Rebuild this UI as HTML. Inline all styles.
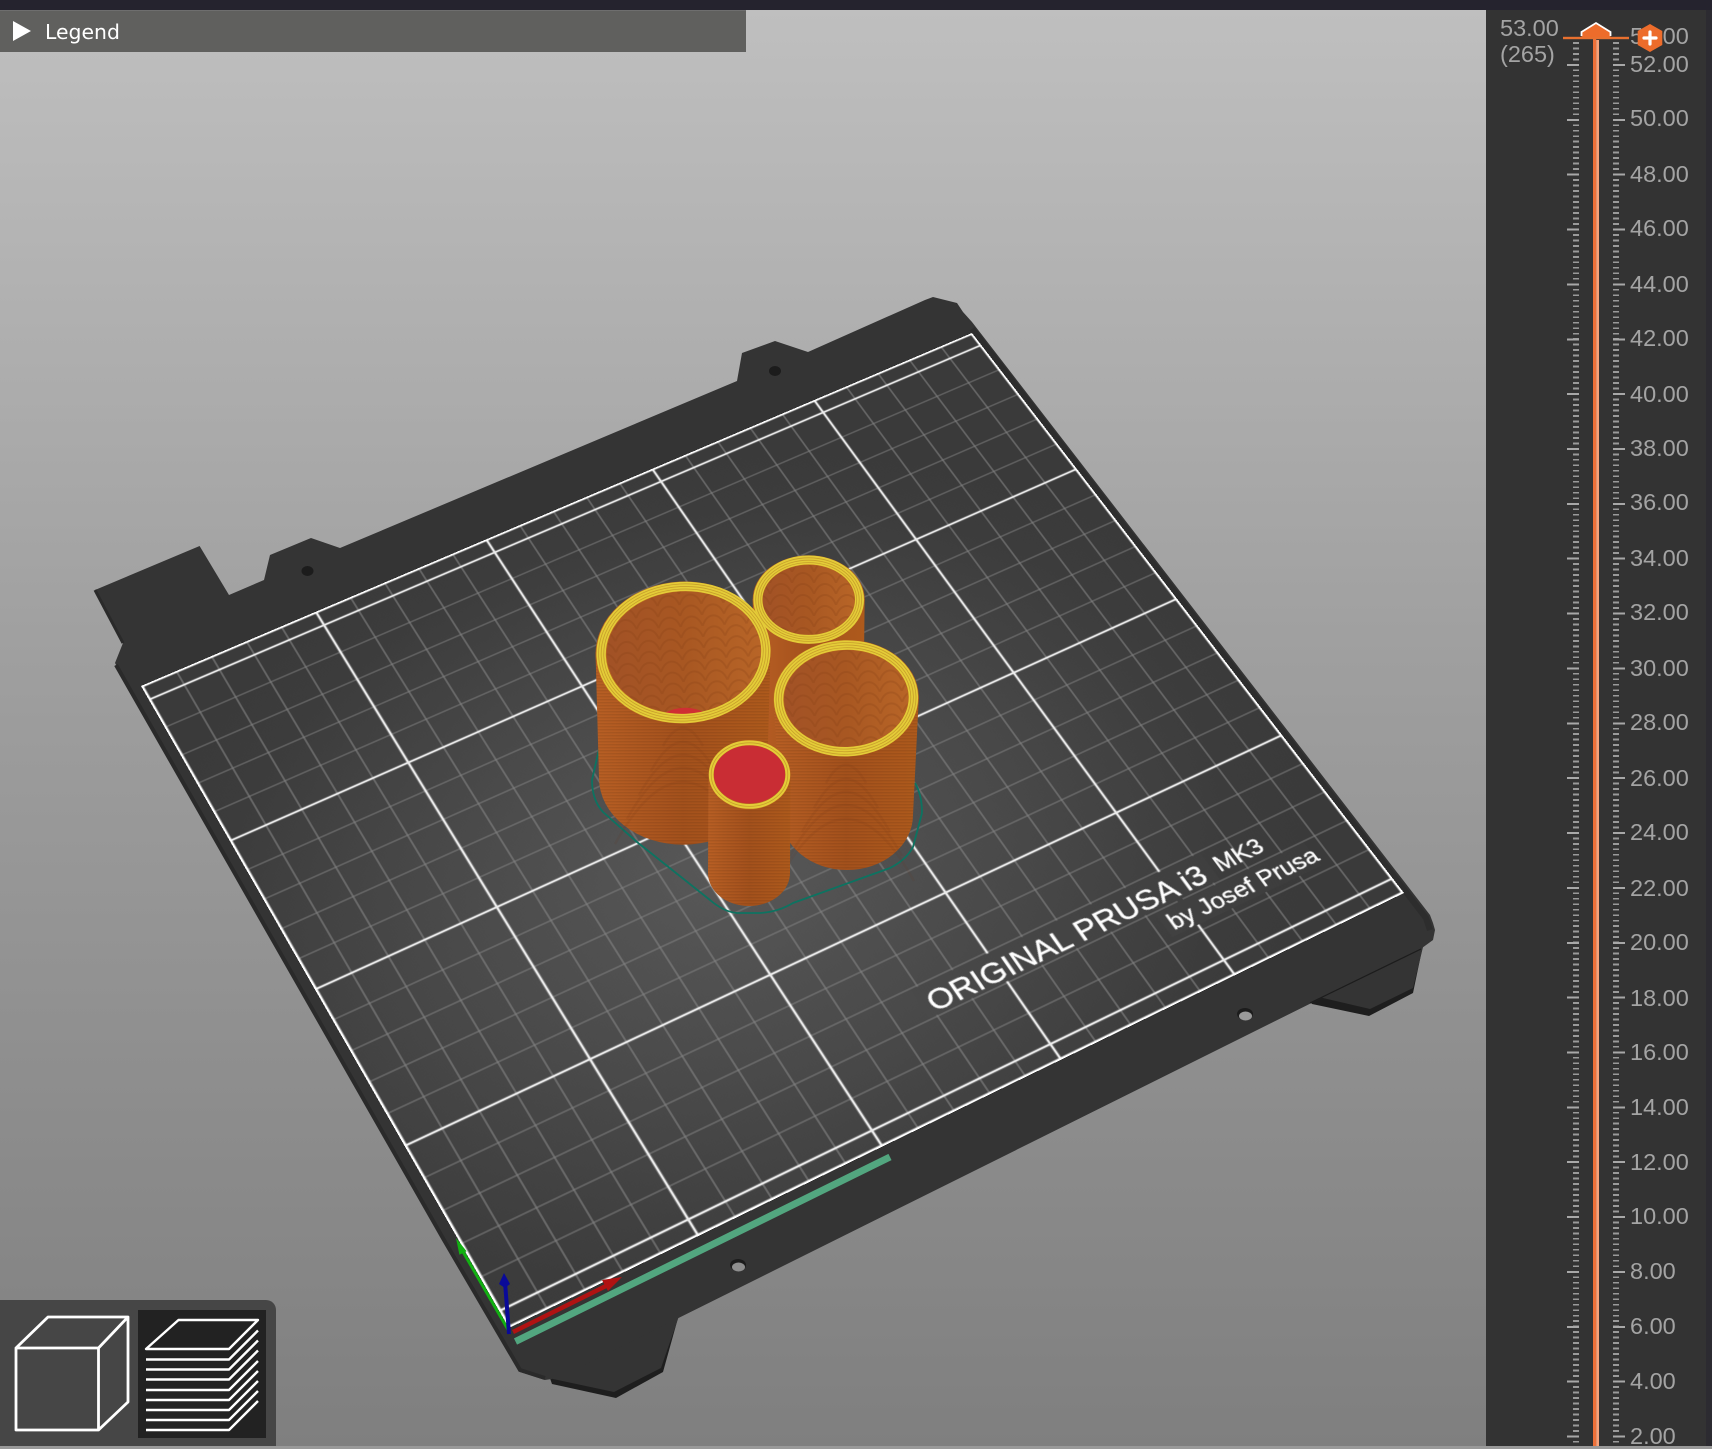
<!DOCTYPE html>
<html><head><meta charset="utf-8"><title>Legend</title>
<style>
html,body{margin:0;padding:0;width:1712px;height:1446px;overflow:hidden;background:#999}
#v{position:absolute;left:0;top:10px;width:1486px;height:1436px;background:linear-gradient(180deg,#bfbfbf 0,#9f9f9f 45%,#7f7f7f 100%)}
#top{position:absolute;left:0;top:0;width:1712px;height:10px;background:#25232e}
svg.s{position:absolute;left:0;top:0}
#area{position:absolute;left:0;top:0;width:1000px;height:840px;transform-origin:0 0;transform:matrix3d(.9985,-.36917,0,.00007372, .41874,.6701,0,-.00013731, 0,0,1,0, 157.26,765.12,0,1.11534);background:radial-gradient(ellipse 620px 520px at 42% 58%,#585858 0,#4a4a4a 45%,#3c3c3c 85%,#3a3a3a 100%)}
#legend{position:absolute;left:0;top:10px;width:746px;height:42px;background:#60605e;border-top:1px solid #6e6e6e;box-sizing:border-box;color:#fff;font:20.4px/42px "DejaVu Sans","Liberation Sans",sans-serif}
#legend span{position:absolute;left:45px;top:0}
#tri{position:absolute;left:13px;top:10px;width:0;height:0;border-left:18px solid #fff;border-top:10px solid transparent;border-bottom:10px solid transparent}
#panel{position:absolute;left:1486px;top:10px;width:220px;height:1436px;background:#333}
#strip{position:absolute;left:1706px;top:10px;width:6px;height:1436px;background:#2c2b31}
.t{position:absolute;top:42px;height:1404px;width:6px;background:repeating-linear-gradient(180deg,#9a9a9a 0,#9a9a9a 1.8px,transparent 1.8px,transparent 5.486px)}
.m{position:absolute;top:63.500px;height:1382px;width:12px;background:repeating-linear-gradient(180deg,#a8a8a8 0,#a8a8a8 2px,transparent 2px,transparent 54.86px)}
.l{position:absolute;left:1630px;font:23.500px/26px "Liberation Sans",sans-serif;color:#a4a4a4;white-space:nowrap}
#ui{position:absolute;left:0;top:1300px;width:276px;height:146px;background:#464646;border-radius:0 10px 0 0}
</style></head><body>
<div id="v"></div>
<div id="top"></div>

<svg class="s" width="1486" height="1446" viewBox="0 0 1486 1446">
  <polygon points="678,1318 663,1372 616,1398 552,1384 540,1350" fill="#1e1e1e"/>
  <polygon points="679,1316 661,1368 614,1392 553,1379 540,1345" fill="#343434"/>
  <polygon points="1423,945 1413,993 1369,1016 1312,1004 1300,990" fill="#1e1e1e"/>
  <polygon points="1424,943 1413,988 1370,1009 1323,998 1300,985" fill="#343434"/>
  <polygon fill="#343434" points="95,590 199.6,546 229,595 264,580 270,555 311,538 340,548 737,381 742,353 775,341 808,352 925,300 933,297 957,303 963,312 972,322 1430,915 1433,923 1435,930 1433,940 1422,948 558,1378 545,1380 520,1372 444,1240 115,663 123,643"/>
  <polyline points="95,590 123,643" fill="none" stroke="#2a2a2a" stroke-width="3"/>
  <polyline points="116,665 444,1240 520,1370 545,1378" fill="none" stroke="#2a2a2a" stroke-width="4"/>
  <polyline points="972,329 1426,918 1430,930" fill="none" stroke="#2d2d2d" stroke-width="6"/>
  <polyline points="1421,949 1310,1003" fill="none" stroke="#1c1c1c" stroke-width="1.200"/>
  <ellipse cx="307.500" cy="571" rx="6" ry="5" fill="#1c1c1c"/>
  <ellipse cx="775" cy="371" rx="6" ry="5" fill="#1c1c1c"/>
  <ellipse cx="1245" cy="1014" rx="8" ry="6" fill="#1c1c1c"/><ellipse cx="1245.500" cy="1016" rx="6.500" ry="4.500" fill="#9a9a9a"/>
  <ellipse cx="738" cy="1265" rx="8" ry="6" fill="#1c1c1c"/><ellipse cx="738.500" cy="1267" rx="6.500" ry="4.500" fill="#8e8e8e"/>
</svg>

<div id="area">
<svg width="1000" height="840" viewBox="0 0 1000 840" style="display:block">
  <defs>
    <linearGradient id="m1"><stop offset="0" stop-color="#494949"/><stop offset="1" stop-color="#3f3f3f"/></linearGradient>
    <linearGradient id="m2"><stop offset="0" stop-color="#414141"/><stop offset="1" stop-color="#3c3c3c"/></linearGradient>
  </defs>
  <path fill="none" stroke="#828282" stroke-width="1.200" d="M40 0V840M80 0V840M120 0V840M160 0V840M240 0V840M280 0V840M320 0V840M360 0V840M440 0V840M480 0V840M520 0V840M560 0V840M640 0V840M680 0V840M720 0V840M760 0V840M840 0V840M880 0V840M920 0V840M960 0V840M0 60H1000M0 100H1000M0 140H1000M0 180H1000M0 260H1000M0 300H1000M0 340H1000M0 380H1000M0 460H1000M0 500H1000M0 540H1000M0 580H1000M0 660H1000M0 700H1000M0 740H1000M0 780H1000"/>
  <path fill="none" stroke="#ececec" stroke-width="2.600" d="M200 0V840M400 0V840M600 0V840M800 0V840M0 20H1000M0 220H1000M0 420H1000M0 620H1000M0 820H1000"/>
  <rect x="512" y="701.500" width="336" height="37" fill="url(#m1)"/>
  <rect x="770" y="741.500" width="176" height="31.500" fill="url(#m2)"/>
  <rect x="797" y="738" width="6" height="4" fill="#404040"/>
  <rect x="1.200" y="1.200" width="997.600" height="837.600" fill="none" stroke="#fff" stroke-width="2.400"/>
  <g fill="#fff" font-family="'Liberation Sans',sans-serif" stroke="#fff" stroke-width=".3">
    <text x="520" y="735" font-size="33.700">ORIGINAL PRUSA i3</text>
    <text x="853" y="731" font-size="26.500">MK3</text>
    <text x="776" y="767" font-size="26.300">by Josef Prusa</text>
  </g>
</svg>
</div>

<svg class="s" width="1486" height="1446" viewBox="0 0 1486 1446">
  <defs>
    <linearGradient id="b" x1="0" x2="1" y1="0" y2="0"><stop offset="0" stop-color="#b85f24"/><stop offset=".5" stop-color="#a4511c"/><stop offset="1" stop-color="#ae5a1c"/></linearGradient>
    <linearGradient id="n" x1="0" x2="1" y1="0" y2="0"><stop offset="0" stop-color="#a25226"/><stop offset=".5" stop-color="#a85722"/><stop offset="1" stop-color="#b86527"/></linearGradient>
    <pattern id="st" width="4" height="3" patternUnits="userSpaceOnUse"><rect width="4" height="1.400" fill="#000" opacity=".08"/></pattern>
    <pattern id="ch" width="22" height="11" patternUnits="userSpaceOnUse"><path d="M0 11Q4 1 11 1T22 11" fill="none" stroke="#7f3d14" stroke-opacity=".22" stroke-width="2"/></pattern>
    <g id="arcs" fill="none" stroke="#6e3410" stroke-opacity=".1" stroke-width="2.400">
      <path d="M-20 18Q0 -18 20 18M-32 43Q0 -15 32 43M-44 67Q0 -13 44 67M-56 91Q0 -11 56 91M-68 116Q0 -8 68 116"/>
    </g>
  </defs>
  <path d="M600 745L592 780Q592 800 603 812L637 842L710 900Q724 912 737 913L760 913Q778 912 793 903L890 868Q906 860 913 847L922 813Q922 795 915 783" fill="none" stroke="#0d7361" stroke-width="1.800"/>

  <!-- back -->
  <path d="M752.700 599L755 735A54 44 0 0 0 863 735L864.700 599Z" fill="url(#b)"/>
  <ellipse cx="808.700" cy="599.300" rx="56" ry="44" fill="#b8651f"/>
  <ellipse cx="808.700" cy="600" rx="46" ry="35" fill="url(#n)"/><ellipse cx="808.700" cy="600" rx="46" ry="35" fill="url(#ch)"/>
  <ellipse cx="808.700" cy="599.700" rx="50.800" ry="39.700" fill="none" stroke="#e4cc38" stroke-width="9"/>
  <g fill="none" stroke="#b07a20" stroke-opacity=".55" stroke-width=".8">
    <ellipse cx="808.700" cy="599.600" rx="53" ry="41.800"/><ellipse cx="808.700" cy="599.700" rx="50.500" ry="39.500"/><ellipse cx="808.700" cy="599.800" rx="48" ry="37.200"/>
  </g>

  <!-- big -->
  <path d="M595.500 652L599 778A84 66.700 0 0 0 767 778L770.500 652Z" fill="url(#b)"/>
  <path d="M595.500 652L599 778A84 66.700 0 0 0 767 778L770.500 652Z" fill="url(#st)"/>
  <use href="#arcs" x="683" y="728"/>
  <g transform="rotate(-3 683 652.500)">
    <ellipse cx="683" cy="652.500" rx="87.500" ry="71" fill="#b8651f"/>
    <ellipse cx="684" cy="652.500" rx="77.300" ry="61" fill="url(#n)"/><ellipse cx="684" cy="652.500" rx="77.300" ry="61" fill="url(#ch)"/>
  </g>
  <path d="M664 713Q684 703 704 712L704 718L664 718Z" fill="#cf2f33"/>
  <g transform="rotate(-3 683 652.500)">
    <ellipse cx="683.500" cy="652.500" rx="82.400" ry="66" fill="none" stroke="#e4cc38" stroke-width="9.400"/>
    <g fill="none" stroke="#b07a20" stroke-opacity=".55" stroke-width=".8">
      <ellipse cx="683.500" cy="652.500" rx="85" ry="68.600"/><ellipse cx="683.500" cy="652.500" rx="82.400" ry="66"/><ellipse cx="683.500" cy="652.500" rx="79.800" ry="63.400"/>
    </g>
  </g>

  <!-- right -->
  <path d="M773.200 698L781 815A66 55 0 0 0 913 815L918.800 698Z" fill="url(#b)"/>
  <path d="M773.200 698L781 815A66 55 0 0 0 913 815L918.800 698Z" fill="url(#st)"/>
  <use href="#arcs" x="846" y="765"/>
  <g transform="rotate(-2 846 698)">
    <ellipse cx="846" cy="698.300" rx="72.800" ry="58.300" fill="#b8651f"/>
    <ellipse cx="846" cy="698.500" rx="62" ry="48.300" fill="url(#n)"/><ellipse cx="846" cy="698.500" rx="62" ry="48.300" fill="url(#ch)"/>
    <ellipse cx="846" cy="698.400" rx="67.400" ry="53.300" fill="none" stroke="#e4cc38" stroke-width="9.400"/>
    <g fill="none" stroke="#b07a20" stroke-opacity=".55" stroke-width=".8">
      <ellipse cx="846" cy="698.400" rx="70" ry="55.900"/><ellipse cx="846" cy="698.400" rx="67.400" ry="53.300"/><ellipse cx="846" cy="698.400" rx="64.800" ry="50.700"/>
    </g>
  </g>

  <!-- front solid -->
  <path d="M708.500 775L708 873A41 33 0 0 0 790 873L790.500 775Z" fill="url(#b)"/>
  <path d="M708.500 775L708 873A41 33 0 0 0 790 873L790.500 775Z" fill="url(#st)"/>
  <ellipse cx="749.500" cy="774.700" rx="41" ry="34.700" fill="#b8651f"/>
  <ellipse cx="749.500" cy="774.400" rx="35.700" ry="29" fill="#c92d34"/>
  <ellipse cx="749.500" cy="774.600" rx="38.300" ry="31.800" fill="none" stroke="#e4cc38" stroke-width="4.800"/>
  <ellipse cx="749.500" cy="774.600" rx="38.300" ry="31.800" fill="none" stroke="#b07a20" stroke-opacity=".55" stroke-width=".8"/>

  <!-- bar & axes -->
  <line x1="515.500" y1="1341.500" x2="890" y2="1157" stroke="#52a67f" stroke-width="7"/>
  <line x1="510" y1="1333" x2="462" y2="1250" stroke="#12b012" stroke-width="3"/>
  <polygon points="456,1238 466.600,1251.300 459.400,1254.700" fill="#12b012"/>
  <line x1="513" y1="1332" x2="612" y2="1283" stroke="#b01212" stroke-width="4.500"/>
  <polygon points="622,1277 602,1280 608,1291" fill="#b01212"/>
  <line x1="509" y1="1334" x2="505" y2="1282" stroke="#0a0a98" stroke-width="4"/>
  <polygon points="504,1273 510,1284 505,1288 499,1284" fill="#0a0a98"/>
</svg>

<div id="legend"><i id="tri"></i><span>Legend</span></div>

<div id="panel"></div><div id="strip"></div>
<div class="t" style="left:1573px"></div><div class="t" style="left:1613px"></div>
<div class="m" style="left:1567px"></div><div class="m" style="left:1613px"></div>
<div class="l" style="left:1500px;top:15px">53.00</div>
<div class="l" style="left:1500px;top:41px">(265)</div>
<div class="l" style="top:23px">53.00</div>
<div class="l" style="top:51px">52.00</div>
<div class="l" style="top:105px">50.00</div>
<div class="l" style="top:161px">48.00</div>
<div class="l" style="top:215px">46.00</div>
<div class="l" style="top:271px">44.00</div>
<div class="l" style="top:325px">42.00</div>
<div class="l" style="top:381px">40.00</div>
<div class="l" style="top:435px">38.00</div>
<div class="l" style="top:489px">36.00</div>
<div class="l" style="top:545px">34.00</div>
<div class="l" style="top:599px">32.00</div>
<div class="l" style="top:655px">30.00</div>
<div class="l" style="top:709px">28.00</div>
<div class="l" style="top:765px">26.00</div>
<div class="l" style="top:819px">24.00</div>
<div class="l" style="top:875px">22.00</div>
<div class="l" style="top:929px">20.00</div>
<div class="l" style="top:985px">18.00</div>
<div class="l" style="top:1039px">16.00</div>
<div class="l" style="top:1094px">14.00</div>
<div class="l" style="top:1149px">12.00</div>
<div class="l" style="top:1203px">10.00</div>
<div class="l" style="top:1258px">8.00</div>
<div class="l" style="top:1313px">6.00</div>
<div class="l" style="top:1368px">4.00</div>
<div class="l" style="top:1423px">2.00</div>

<svg class="s" width="1712" height="1446" viewBox="0 0 1712 1446">
  <rect x="1593" y="36" width="3.200" height="1410" fill="#ee7038"/>
  <rect x="1596.200" y="40" width="2.800" height="1406" fill="#f8a27a"/>
  <rect x="1563" y="36.800" width="66" height="2.400" fill="#e8702f"/>
  <path d="M1581.500 37V32L1596 23L1610.500 32V37Z" fill="#ed6c2b"/>
  <path d="M1581.500 36V32L1596 23L1610.500 32V36" fill="none" stroke="#fff" stroke-width="1.800"/>
  <polygon points="1650,24 1662.300,31 1662.300,45 1650,52 1637.700,45 1637.700,31" fill="#ed6c2b"/>
  <path d="M1644 38H1656M1650 32V44" stroke="#fff" stroke-width="3.200" stroke-linecap="round" fill="none"/>
</svg>

<div id="ui"></div>
<svg class="s" width="276" height="1446" viewBox="0 0 276 1446">
  <rect x="138" y="1310" width="128" height="128" fill="#222"/>
  <g fill="none" stroke="#fff" stroke-width="2.800" stroke-linejoin="round">
    <path d="M16 1348H98.500V1430H16ZM16 1348L48 1317H128L98.500 1348M128 1317V1402L98.500 1430"/>
  </g>
  <g fill="none" stroke="#fff" stroke-width="2.400" stroke-linejoin="round">
    <path d="M146 1349L178.500 1320H258L229 1349Z"/>
    <path d="M146 1359.500H229L258 1330.500M146 1369.500H229L258 1340.500M146 1379.500H229L258 1350.500M146 1390H229L258 1361M146 1400H229L258 1371M146 1410H229L258 1381M146 1420H229L258 1391M146 1430H229L258 1401"/>
  </g>
</svg>
</body></html>
